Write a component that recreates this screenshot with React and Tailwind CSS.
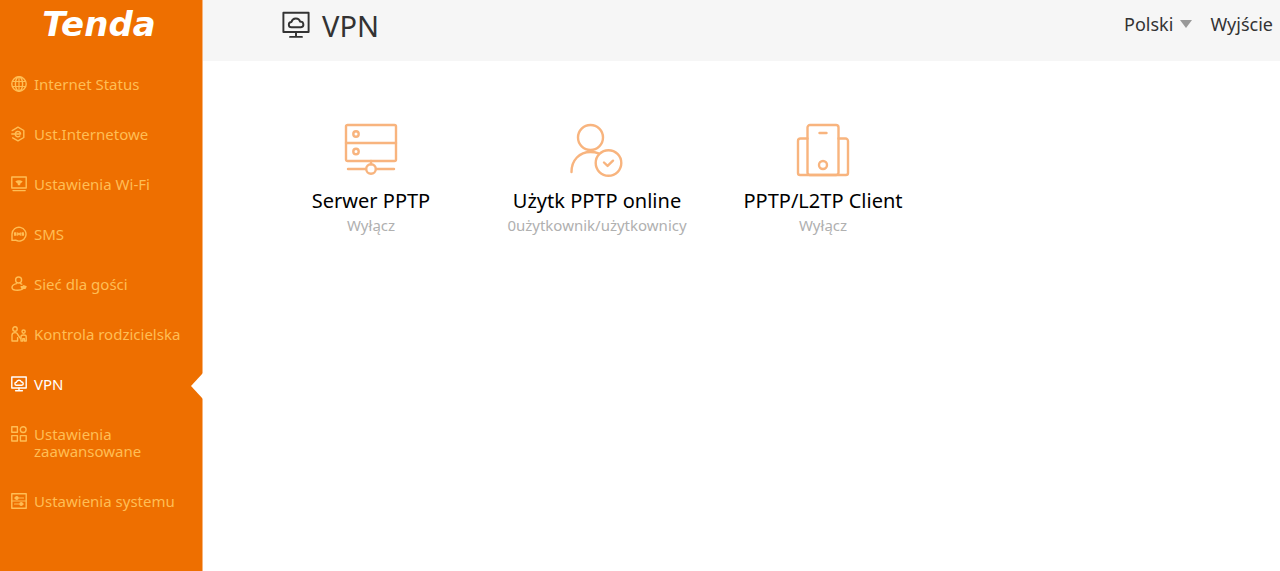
import React from "react";

function Icon({ children, size = "size-4", box = "0 0 16 16", width = 1.4 }) {
  return (
    <svg
      className={`${size} shrink-0`}
      viewBox={box}
      fill="none"
      stroke="currentColor"
      strokeWidth={width}
      strokeLinecap="round"
      strokeLinejoin="round"
      aria-hidden="true"
    >
      {children}
    </svg>
  );
}

const icons = {
  globe: (
    <>
      <circle cx="8" cy="8" r="7.2" />
      <ellipse cx="8" cy="8" rx="3.6" ry="7.2" />
      <path d="M8 .8v14.4M1.7 5.5h12.6M1.7 10.5h12.6" strokeWidth="1.2" />
    </>
  ),
  internet: (
    <>
      <path d="M1.2 4.6 7 1.2l5.800 3.300v7L7 14.800l-5.300-3" />
      <path d="M.8 8h8.800A2.700 2.700 0 1 0 8.800 10" />
    </>
  ),
  wifi: (
    <>
      <rect x=".8" y="1" width="14.4" height="11" />
      <path d="M2 14.6h12.2" />
      <path d="M4.300 5.600a5.400 5.400 0 0 1 7.400 0L9.200 7.800v1.400H6.800V7.800z" fill="currentColor" stroke="none" />
    </>
  ),
  sms: (
    <>
      <path d="M1 14.4V8a7 6.9 0 1 1 3.6 6.2z" />
      <path
        d="M5 6.900H3.500V8H5v1.200H3.500M6.700 9.200V6.900l1.300 1.500 1.300-1.500v2.300M12.500 6.900H11V8h1.500v1.200H11"
        strokeWidth="1.2"
      />
    </>
  ),
  guest: (
    <>
      <circle cx="7.6" cy="4" r="3" />
      <path d="M5.600 7.600C2.800 8.200 1 9.600 1 11.400c0 2 2.400 2.800 5.600 2.800 2.400 0 4-.4 5.200-1.200M9.400 7.600l1.400.6" />
      <path d="M10.200 10.600h1.600l1-.8 2.200.8-1 1.800h-3z" fill="currentColor" />
    </>
  ),
  family: (
    <>
      <circle cx="4" cy="3" r="2.200" />
      <path d="M6.400 15H1V9.200C1 7.400 2.400 6.600 4 6.600s2.600.8 3 2.400l2.600 3.600M6.600 11.600V15" />
      <circle cx="12.600" cy="5.600" r="1.600" />
      <path d="M10 15v-4.400c0-1 1.200-1.600 2.600-1.600s2.600.6 2.600 1.600V15h-1.800v-2.400h-1.600V15z" />
    </>
  ),
  vpn: (
    <>
      <rect x=".8" y="1" width="14.4" height="11" />
      <path d="M8 12v2.8M4.6 14.8h6.8" />
      <path d="M5.400 9.300a1.500 1.500 0 0 1 0-3 2.600 2.600 0 0 1 5-.2 1.600 1.600 0 0 1 .4 3.200z" />
    </>
  ),
  advanced: (
    <>
      <rect x=".8" y=".8" width="5.6" height="5.4" />
      <circle cx="12.2" cy="3.6" r="2.900" />
      <rect x=".8" y="9.6" width="5.6" height="5.4" />
      <rect x="9.4" y="9.6" width="5.8" height="5.4" />
    </>
  ),
  system: (
    <>
      <rect x=".8" y=".8" width="14.4" height="14.4" />
      <path d="M3.500 5h9M3.500 11h9M1 8h14" strokeWidth="1.2" />
      <circle cx="5.800" cy="5" r="1.200" fill="currentColor" />
      <circle cx="10.200" cy="11" r="1.200" fill="currentColor" />
    </>
  ),
};

const menu = [
  ["globe", "Internet Status"],
  ["internet", "Ust.Internetowe"],
  ["wifi", "Ustawienia Wi-Fi"],
  ["sms", "SMS"],
  ["guest", "Sieć dla gości"],
  ["family", "Kontrola rodzicielska"],
  ["vpn", "VPN"],
  ["advanced", "Ustawienia zaawansowane"],
  ["system", "Ustawienia systemu"],
];

const tiles = [
  {
    title: "Serwer PPTP",
    status: "Wyłącz",
    art: (
      <>
        <rect x="2" y="2" width="50" height="36" rx="1.5" />
        <path d="M2 20h50M27 38v3.200M4 46h18M32 46h18" />
        <circle cx="12" cy="11" r="2.700" />
        <circle cx="12" cy="28.500" r="2.700" />
        <circle cx="27" cy="46" r="4.800" />
      </>
    ),
  },
  {
    title: "Użytk PPTP online",
    status: "0użytkownik/użytkownicy",
    art: (
      <>
        <circle cx="20.500" cy="14.500" r="12.500" />
        <path d="M1.500 49C1.500 37 9.500 29 20.500 29c3 0 5.500.4 8 1.400" />
        <circle cx="38.500" cy="40" r="12.800" />
        <path d="m34 39.500 3.600 3.400 5.400-5.200" />
      </>
    ),
  },
  {
    title: "PPTP/L2TP Client",
    status: "Wyłącz",
    art: (
      <>
        <rect x="11.500" y="2" width="31" height="50" rx="2.500" />
        <path d="M11.500 15.500H4.500a2.500 2.500 0 0 0-2.500 2.500v32a2 2 0 0 0 2 2h46a2 2 0 0 0 2-2V18a2.500 2.500 0 0 0-2.500-2.500h-7M23.500 10h7" />
        <circle cx="27" cy="42" r="4" />
      </>
    ),
  },
];

function Sidebar() {
  return (
    <aside className="w-[203px] shrink-0 border-r border-[#f7b47c] bg-[#ee6f00]">
      <div className="flex h-12 items-center justify-center pr-1 font-['DejaVu_Sans'] text-[34px] leading-none font-bold text-white italic">
        Tenda
      </div>
      <nav className="pt-7">
        <ul className="flex flex-col gap-[33px]">
          {menu.map(([icon, label]) => {
            const active = icon === "vpn";
            return (
              <li key={label} className="relative">
                <a
                  href={`#${icon}`}
                  aria-current={active ? "page" : undefined}
                  className={`flex gap-[7px] pr-3 pl-[11px] text-[15px] leading-[17px] ${
                    active ? "text-white" : "text-[#ffbe55]"
                  }`}
                >
                  <Icon>{icons[icon]}</Icon>
                  <span>{label}</span>
                </a>
                {active && (
                  <svg
                    className="absolute -top-[3px] -right-px h-[26px] w-3 text-white"
                    viewBox="0 0 12 26"
                    fill="currentColor"
                    aria-hidden="true"
                  >
                    <path d="M12 0v26L0 13z" />
                  </svg>
                )}
              </li>
            );
          })}
        </ul>
      </nav>
    </aside>
  );
}

function Header() {
  return (
    <header className="flex h-[61px] items-start justify-between bg-[#f6f6f6] pr-[7px] pl-[79px] text-[#333]">
      <div className="flex h-[50px] items-center gap-3">
        <Icon size="size-7" width={1.1}>
          {icons.vpn}
        </Icon>
        <h1 className="text-[29px] leading-none">VPN</h1>
      </div>
      <div className="flex h-12 items-center gap-[18px] text-lg">
        <label className="flex items-center gap-[7px]">
          <select
            aria-label="Język"
            className="h-9 [field-sizing:content] appearance-none bg-transparent leading-9"
          >
            <option>Polski</option>
          </select>
          <svg className="h-2 w-3 text-[#999]" viewBox="0 0 12 8" fill="currentColor" aria-hidden="true">
            <path d="M0 0h12L6 8z" />
          </svg>
        </label>
        <button type="button">Wyjście</button>
      </div>
    </header>
  );
}

export default function App() {
  return (
    <div className="flex min-h-screen bg-white font-['Noto_Sans',sans-serif]">
      <Sidebar />
      <div className="min-w-0 flex-1">
        <Header />
        <main className="flex flex-wrap pt-[62px] pl-[55px]">
          {tiles.map((t) => (
            <button key={t.title} type="button" className="flex w-[226px] flex-col items-center">
              <Icon size="size-[54px] text-[#f8b47e]" box="0 0 54 54" width={2.4}>
                {t.art}
              </Icon>
              <span className="mt-3 text-xl leading-6 whitespace-nowrap text-black">{t.title}</span>
              <span className="text-[15px] leading-6 whitespace-nowrap text-[#b0b0b0]">{t.status}</span>
            </button>
          ))}
        </main>
      </div>
    </div>
  );
}
